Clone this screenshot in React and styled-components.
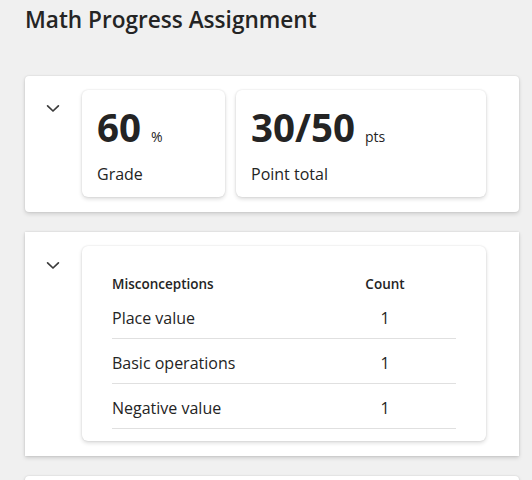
import React from 'react';
import styled, { createGlobalStyle } from 'styled-components';

const GlobalStyle = createGlobalStyle`
  html, body {
    margin: 0;
    padding: 0;
    overflow: hidden;
    background: #f0f0f0;
  }
  body {
    font-family: "Open Sans", "Noto Sans", sans-serif;
    color: #242424;
  }
`;

const Page = styled.main`
  padding: 6px 13px 0 25px;
`;

const Title = styled.h1`
  margin: 0 0 42px;
  font-size: 22.6px;
  line-height: 28px;
  font-weight: 600;
`;

const Sections = styled.div`
  display: flex;
  flex-direction: column;
  gap: 20px;
`;

const Section = styled.section`
  display: flex;
  align-items: flex-start;
  gap: 19px;
  min-height: ${p => p.$minHeight || 0}px;
  padding: 14px 33px 15px 18px;
  background: #fff;
  border-radius: ${p => (p.$square ? '0' : '4px')};
  box-shadow: 0 0 2px rgba(0, 0, 0, 0.12), 0 2px 4px rgba(0, 0, 0, 0.14);
`;

const Toggle = styled.button`
  display: flex;
  width: 20px;
  height: 20px;
  margin-top: ${p => p.$offset || 8}px;
  padding: 0;
  border: 0;
  background: none;
  color: #3b3b3b;
  cursor: pointer;
`;

const Body = styled.div`
  flex: 1;
  display: flex;
  gap: 11px;
`;

const Tile = styled.div`
  box-sizing: border-box;
  width: ${p => (p.$width ? `${p.$width}px` : 'auto')};
  flex: ${p => (p.$width ? 'none' : '1')};
  padding: ${p => p.$pad};
  background: #fff;
  border-radius: 6px;
  box-shadow: 0 0 2px rgba(0, 0, 0, 0.12), 0 2px 4px rgba(0, 0, 0, 0.14);
`;

const ValueLine = styled.div`
  display: flex;
  align-items: baseline;
`;

const BigNumber = styled.span`
  font-size: 38.5px;
  line-height: 44px;
  font-weight: 700;
`;

const Unit = styled.span`
  margin-left: 10px;
  font-size: 14px;
  line-height: 20px;
`;

const StatLabel = styled.div`
  margin-top: 14px;
  font-size: 16px;
  line-height: 22px;
`;

const Row = styled.div`
  display: grid;
  grid-template-columns: 1fr 142px;
  align-items: center;
  box-sizing: border-box;
  ${p =>
    p.$head
      ? `
    padding-top: 1px;
    font-size: 13.5px;
    line-height: 19px;
    font-weight: 600;
  `
      : `
    height: 45px;
    padding-top: 3px;
    font-size: 16px;
    line-height: 22px;
    border-bottom: 1px solid #e0e0e0;
  `}
`;

const CountCell = styled.span`
  text-align: center;
`;

const Chevron = () => (
  <svg width="20" height="20" viewBox="0 0 20 20" fill="none" stroke="currentColor"
    strokeWidth="1.7" strokeLinecap="round" strokeLinejoin="round">
    <path d="M4.6 7.8 10 13l5.4-5.2" />
  </svg>
);

const stats = [
  { value: '60', unit: '%', label: 'Grade', width: 143 },
  { value: '30/50', unit: 'pts', label: 'Point total', width: 250 },
];

const misconceptions = [
  { name: 'Place value', count: 1 },
  { name: 'Basic operations', count: 1 },
  { name: 'Negative value', count: 1 },
];

const App = () => (
  <>
    <GlobalStyle />
    <Page>
      <Title>Math Progress Assignment</Title>
      <Sections>
        <Section>
          <Toggle aria-label="Collapse">
            <Chevron />
          </Toggle>
          <Body>
            {stats.map(s => (
              <Tile key={s.label} $width={s.width} $pad="15px 14px 12px 15px">
                <ValueLine>
                  <BigNumber>{s.value}</BigNumber>
                  <Unit>{s.unit}</Unit>
                </ValueLine>
                <StatLabel>{s.label}</StatLabel>
              </Tile>
            ))}
          </Body>
        </Section>

        <Section $square>
          <Toggle aria-label="Collapse" $offset={9}>
            <Chevron />
          </Toggle>
          <Body>
            <Tile $pad="28px 30px 12px">
              <Row $head>
                <span>Misconceptions</span>
                <CountCell>Count</CountCell>
              </Row>
              {misconceptions.map(m => (
                <Row key={m.name}>
                  <span>{m.name}</span>
                  <CountCell>{m.count}</CountCell>
                </Row>
              ))}
            </Tile>
          </Body>
        </Section>

        <Section $minHeight={80} />
      </Sections>
    </Page>
  </>
);

export default App;
